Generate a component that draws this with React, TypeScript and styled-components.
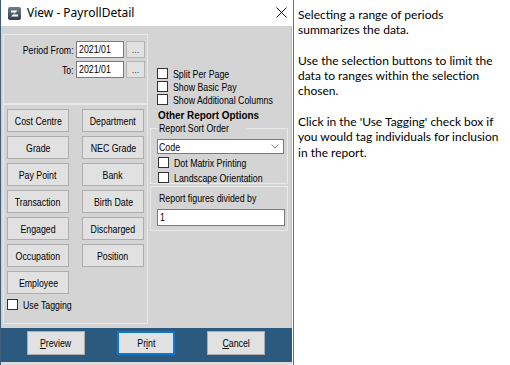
import styled, { createGlobalStyle } from "styled-components";

const dlgFont = `"Liberation Sans", Arial, sans-serif`;

const GlobalStyle = createGlobalStyle`
  html, body {
    margin: 0;
    padding: 0;
    background: #ffffff;
  }
`;

const Page = styled.div`
  display: flex;
  height: 365px;
  width: 510px;
  overflow: hidden;
  background: #ffffff;
`;

const Window = styled.div`
  width: 291px;
  height: 365px;
  display: flex;
  flex-direction: column;
  border-left: 1px solid #3c5e7a;
  font-family: ${dlgFont};
  font-size: 11px;
  color: #000;
`;

// the dialog uses a narrow bitmap font, so text is squeezed horizontally
const Txt = styled.span<{ $origin?: string; $scale?: number }>`
  display: inline-block;
  white-space: nowrap;
  transform: scaleX(${(p) => p.$scale ?? 0.8});
  transform-origin: ${(p) => p.$origin ?? "left"} center;
`;

const TitleBar = styled.div`
  height: 26px;
  flex: none;
  background: #ffffff;
  display: flex;
  align-items: center;
  padding-left: 7px;
`;

const Title = styled.span`
  font-family: "Noto Sans", "Liberation Sans", sans-serif;
  font-size: 12px;
  margin-left: 6px;
  flex: 1;
  padding-bottom: 1px;
`;

const CloseIcon = styled.svg`
  margin-right: 5px;
  margin-bottom: 1px;
`;

const Body = styled.div`
  flex: 1;
  display: flex;
  gap: 2px;
  background: #d4d4d4;
  padding: 8px 0 4px 2px;
  border-right: 1px solid #bdbdbd;
`;

const LeftCol = styled.div`
  width: 145px;
  display: flex;
  flex-direction: column;
`;

const GroupBox = styled.div`
  box-sizing: border-box;
  border: 1px solid #e9e9e9;
`;

const PeriodBox = styled(GroupBox)`
  height: 70px;
  padding: 6px 0 0 0;
  display: flex;
  flex-direction: column;
  gap: 3px;
`;

const FieldRow = styled.div`
  display: grid;
  grid-template-columns: 70px 48px 19px;
  column-gap: 2px;
  align-items: center;
`;

const FieldLabel = styled.span`
  text-align: right;
`;

const TextBox = styled.div<{ $width?: number }>`
  box-sizing: border-box;
  height: 17px;
  width: ${(p) => (p.$width ? `${p.$width}px` : "100%")};
  padding: 0 2px;
  border: 1px solid #7a7a7a;
  background: #fff;
  line-height: 15px;
  overflow: hidden;
`;

const DotsButton = styled.div`
  box-sizing: border-box;
  height: 17px;
  border: 1px solid #b4b4b4;
  background: #e1e1e1;
  font-size: 9px;
  text-align: center;
  line-height: 17px;
  color: #333;
`;

const SelectionBox = styled(GroupBox)`
  flex: 1;
  padding: 4px 0 0 3px;
`;

const ButtonGrid = styled.div`
  display: grid;
  grid-template-columns: 62px 62px;
  grid-auto-rows: 23px;
  column-gap: 13px;
  row-gap: 4px;
`;

const SelButton = styled.div`
  box-sizing: border-box;
  border: 1px solid #adadad;
  background: #e1e1e1;
  display: flex;
  align-items: center;
  justify-content: center;
  white-space: nowrap;
`;

const CheckRow = styled.div<{ $top?: number }>`
  display: flex;
  align-items: center;
  gap: 5px;
  height: 13px;
  margin-top: ${(p) => p.$top ?? 0}px;
`;

const CheckBox = styled.span`
  box-sizing: border-box;
  width: 11px;
  height: 11px;
  border: 1px solid #333;
  background: #fff;
  flex: none;
`;

const RightCol = styled.div`
  width: 138px;
  display: flex;
  flex-direction: column;
`;

const CheckList = styled.div`
  margin-top: 33px;
  padding-left: 7px;
  display: flex;
  flex-direction: column;
`;

const SectionTitle = styled.div`
  font-weight: bold;
  font-size: 11.5px;
  padding-left: 8px;
  margin-top: 3px;
  line-height: 13px;
`;

const SortSet = styled.fieldset`
  box-sizing: border-box;
  margin: 0;
  padding: 0 0 0 6px;
  height: 62px;
  border: 1px solid #e9e9e9;
  min-width: 0;
`;

const SortLegend = styled.legend`
  padding: 0 1px;
  margin-left: 1px;
  font-size: 11px;
  line-height: 13px;
`;

const Combo = styled.div`
  box-sizing: border-box;
  width: 127px;
  height: 15px;
  margin-top: 4px;
  background: #fff;
  border: 1px solid #7a7a7a;
  display: flex;
  align-items: center;
  justify-content: space-between;
  padding: 0 4px 0 1px;
`;

const SortChecks = styled.div`
  padding-left: 1px;
  margin-top: 2px;
  display: flex;
  flex-direction: column;
  gap: 2px;
`;

const FiguresBox = styled(GroupBox)`
  height: 45px;
  margin-top: 2px;
  padding: 5px 0 0 6px;
`;

const FiguresLabel = styled.div`
  padding-left: 2px;
  line-height: 13px;
  margin-bottom: 4px;
`;

const Footer = styled.div`
  height: 31px;
  flex: none;
  background: #2b5a7e;
  display: flex;
  align-items: flex-start;
  padding: 3px 0 0 26px;
  gap: 32px;
`;

const FooterButton = styled.div<{ $focused?: boolean }>`
  box-sizing: border-box;
  width: 58px;
  height: 24px;
  background: #e1e1e1;
  border: ${(p) => (p.$focused ? "2px solid #0a78d4" : "1px solid #adadad")};
  display: flex;
  align-items: center;
  justify-content: center;
`;

const BottomStrip = styled.div`
  height: 3px;
  flex: none;
  background: #dcdcdc;
`;

const HelpPanel = styled.div`
  flex: 1;
  margin-left: 1px;
  border-left: 1px solid #707070;
  padding: 7px 0 0 4px;
  font-family: Lato, "Open Sans", sans-serif;
  font-size: 12px;
  line-height: 15.3px;
  color: #000;
  white-space: nowrap;
`;

const HelpPara = styled.p`
  margin: 0 0 15.3px 0;
`;

const selectionButtons = [
  "Cost Centre",
  "Department",
  "Grade",
  "NEC Grade",
  "Pay Point",
  "Bank",
  "Transaction",
  "Birth Date",
  "Engaged",
  "Discharged",
  "Occupation",
  "Position",
  "Employee",
];

const AppIcon = () => (
  <svg width="13" height="13" viewBox="0 0 13 13">
    <defs>
      <linearGradient id="ig" x1="0" y1="0" x2="0" y2="1">
        <stop offset="0" stopColor="#6f7f8f" />
        <stop offset="1" stopColor="#2f3d4b" />
      </linearGradient>
    </defs>
    <rect x="0" y="0" width="13" height="13" rx="2" fill="url(#ig)" />
    <path d="M3 3.5 H9.5 L5.5 7.5 H10 V9.5 H3 L7 5.5 H3 Z" fill="#ffffff" />
  </svg>
);

const Check = ({ label }: { label: string }) => (
  <CheckRow>
    <CheckBox />
    <Txt>{label}</Txt>
  </CheckRow>
);

export default function App() {
  return (
    <Page>
      <GlobalStyle />
      <Window>
        <TitleBar>
          <AppIcon />
          <Title>View - PayrollDetail</Title>
          <CloseIcon width="11" height="11" viewBox="0 0 11 11">
            <path d="M0.5 0.5 L10.5 10.5 M10.5 0.5 L0.5 10.5" stroke="#111" strokeWidth="1" />
          </CloseIcon>
        </TitleBar>
        <Body>
          <LeftCol>
            <PeriodBox>
              <FieldRow>
                <FieldLabel>
                  <Txt $origin="right">Period From:</Txt>
                </FieldLabel>
                <TextBox>
                  <Txt>2021/01</Txt>
                </TextBox>
                <DotsButton>...</DotsButton>
              </FieldRow>
              <FieldRow>
                <FieldLabel>
                  <Txt $origin="right">To:</Txt>
                </FieldLabel>
                <TextBox>
                  <Txt>2021/01</Txt>
                </TextBox>
                <DotsButton>...</DotsButton>
              </FieldRow>
            </PeriodBox>
            <SelectionBox>
              <ButtonGrid>
                {selectionButtons.map((b) => (
                  <SelButton key={b}>
                    <Txt $origin="center">{b}</Txt>
                  </SelButton>
                ))}
              </ButtonGrid>
              <CheckRow $top={4}>
                <CheckBox />
                <Txt>Use Tagging</Txt>
              </CheckRow>
            </SelectionBox>
          </LeftCol>
          <RightCol>
            <CheckList>
              <Check label="Split Per Page" />
              <Check label="Show Basic Pay" />
              <Check label="Show Additional Columns" />
            </CheckList>
            <SectionTitle>
              <Txt $scale={0.86}>Other Report Options</Txt>
            </SectionTitle>
            <SortSet>
              <SortLegend>
                <Txt>Report Sort Order</Txt>
              </SortLegend>
              <Combo>
                <Txt>Code</Txt>
                <svg width="8" height="5" viewBox="0 0 8 5">
                  <path d="M0.5 0.5 L4 4 L7.5 0.5" stroke="#8a8a8a" fill="none" />
                </svg>
              </Combo>
              <SortChecks>
                <Check label="Dot Matrix Printing" />
                <Check label="Landscape Orientation" />
              </SortChecks>
            </SortSet>
            <FiguresBox>
              <FiguresLabel>
                <Txt>Report figures divided by</Txt>
              </FiguresLabel>
              <TextBox $width={128}>
                <Txt>1</Txt>
              </TextBox>
            </FiguresBox>
          </RightCol>
        </Body>
        <Footer>
          <FooterButton>
            <Txt $origin="center">
              <u>P</u>review
            </Txt>
          </FooterButton>
          <FooterButton $focused>
            <Txt $origin="center">
              Pr<u>i</u>nt
            </Txt>
          </FooterButton>
          <FooterButton>
            <Txt $origin="center">
              <u>C</u>ancel
            </Txt>
          </FooterButton>
        </Footer>
        <BottomStrip />
      </Window>
      <HelpPanel>
        <HelpPara>
          Selecting a range of periods
          <br />
          summarizes the data.
        </HelpPara>
        <HelpPara>
          Use the selection buttons to limit the
          <br />
          data to ranges within the selection
          <br />
          chosen.
        </HelpPara>
        <HelpPara>
          Click in the 'Use Tagging' check box if
          <br />
          you would tag individuals for inclusion
          <br />
          in the report.
        </HelpPara>
      </HelpPanel>
    </Page>
  );
}
